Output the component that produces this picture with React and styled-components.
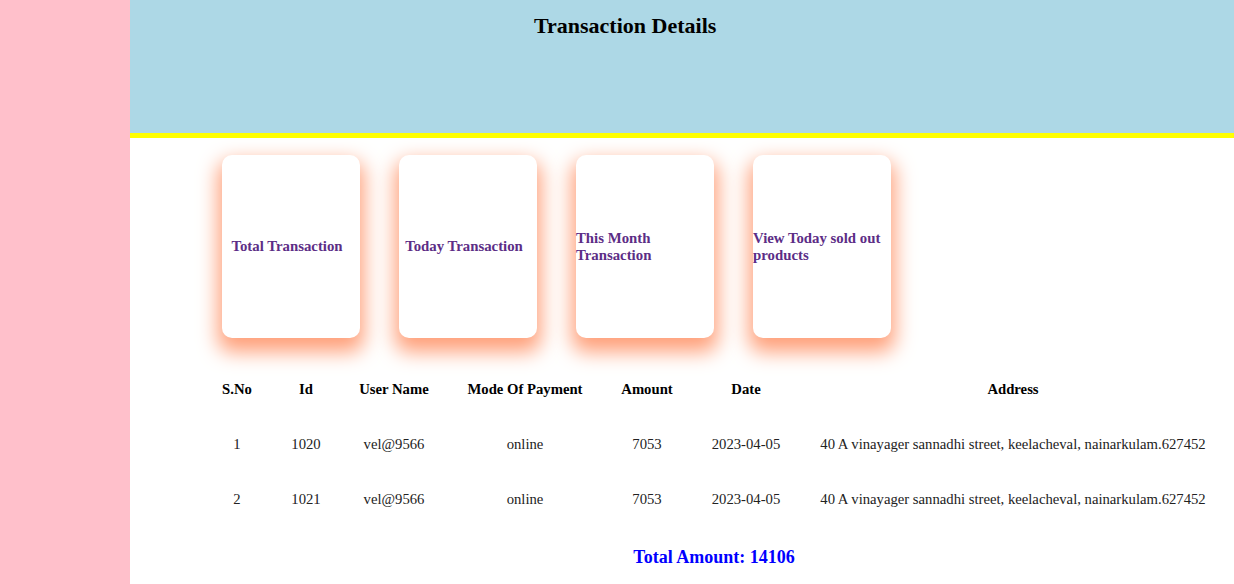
import React from "react";
import styled, { createGlobalStyle } from "styled-components";

const GlobalStyle = createGlobalStyle`
  body {
    margin: 0;
    font-family: "Liberation Serif", "Times New Roman", serif;
    background: #ffffff;
  }
`;

const Page = styled.div`
  display: flex;
  min-height: 584px;
`;

const Sidebar = styled.div`
  width: 130px;
  flex-shrink: 0;
  background-color: pink;
`;

const Main = styled.div`
  flex: 1;
  display: flex;
  flex-direction: column;
`;

const Header = styled.div`
  height: 133px;
  background-color: lightblue;
  border-bottom: 5px solid yellow;
  box-sizing: content-box;
`;

const Title = styled.h2`
  margin: 0;
  padding: 13px 0 0 404px;
  font-size: 22px;
  font-weight: bold;
  color: #000;
`;

const CardRow = styled.div`
  display: flex;
  gap: 39px;
  padding: 17px 0 0 92px;
`;

const Card = styled.div`
  width: 138px;
  height: 183px;
  padding-right: 8px;
  box-sizing: border-box;
  background: #fff;
  border-radius: 10px;
  box-shadow: 0 10px 20px 4px lightsalmon;
  display: flex;
  align-items: center;
  justify-content: center;
`;

const CardText = styled.div`
  font-size: 14.8px;
  font-weight: bold;
  line-height: 17px;
  color: #5c2d86;
`;

const TableArea = styled.div`
  width: 1008px;
  margin: 24px 0 0 80px;
`;

const Table = styled.table`
  width: 100%;
  border-collapse: collapse;
  table-layout: fixed;
  font-size: 14.7px;
  color: #222;
`;

const Th = styled.th`
  width: ${(p) => p.w}px;
  height: 55px;
  padding: 0;
  text-align: center;
  font-weight: bold;
  color: #000;
`;

const Td = styled.td`
  height: 55px;
  padding: 0;
  text-align: center;
`;

const Total = styled.div`
  margin-top: 20px;
  text-align: center;
  font-size: 18px;
  font-weight: bold;
  color: blue;
`;

const cards = [
  "Total Transaction",
  "Today Transaction",
  "This Month Transaction",
  "View Today sold out products",
];

const columns = [
  ["S.No", 54],
  ["Id", 84],
  ["User Name", 92],
  ["Mode Of Payment", 170],
  ["Amount", 74],
  ["Date", 124],
  ["Address", 410],
];

const rows = [
  [1, 1020, "vel@9566", "online", 7053, "2023-04-05", "40 A vinayager sannadhi street, keelacheval, nainarkulam.627452"],
  [2, 1021, "vel@9566", "online", 7053, "2023-04-05", "40 A vinayager sannadhi street, keelacheval, nainarkulam.627452"],
];

const App = () => {
  const total = rows.reduce((sum, r) => sum + r[4], 0);
  return (
    <>
      <GlobalStyle />
      <Page>
        <Sidebar />
        <Main>
          <Header>
            <Title>Transaction Details</Title>
          </Header>
          <CardRow>
            {cards.map((c) => (
              <Card key={c}>
                <CardText>{c}</CardText>
              </Card>
            ))}
          </CardRow>
          <TableArea>
            <Table>
              <thead>
                <tr>
                  {columns.map(([name, w]) => (
                    <Th key={name} w={w}>
                      {name}
                    </Th>
                  ))}
                </tr>
              </thead>
              <tbody>
                {rows.map((r) => (
                  <tr key={r[1]}>
                    {r.map((cell, i) => (
                      <Td key={i}>{cell}</Td>
                    ))}
                  </tr>
                ))}
              </tbody>
            </Table>
            <Total>Total Amount: {total}</Total>
          </TableArea>
        </Main>
      </Page>
    </>
  );
};

export default App;
